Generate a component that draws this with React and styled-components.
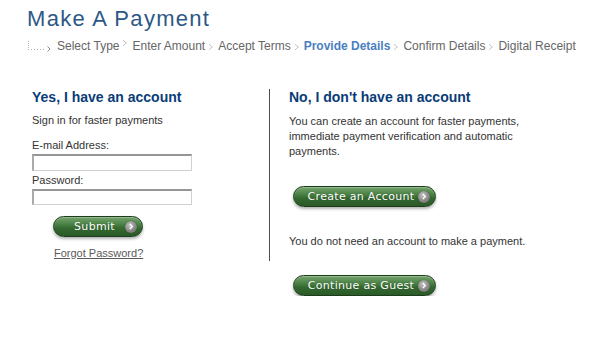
import React from "react"
import styled, { createGlobalStyle } from "styled-components"

const GlobalStyle = createGlobalStyle`
  html, body {
    margin: 0;
    padding: 0;
    background: #ffffff;
    font-family: "Liberation Sans", Arial, sans-serif;
    color: #333333;
  }
`

const Page = styled.div`
  padding-left: 27px;
  width: 588px;
`

const Title = styled.h1`
  margin: 6px 0 0;
  font-size: 22px;
  line-height: 26px;
  font-weight: normal;
  letter-spacing: 1.3px;
  color: #2d5886;
`

const Steps = styled.div`
  display: flex;
  align-items: center;
  margin-top: 6px;
  height: 16px;
  font-size: 12px;
  line-height: 16px;
  white-space: nowrap;
`

const Step = styled.span`
  color: ${p => (p.$active ? "#4a7fbf" : "#666666")};
  font-weight: ${p => (p.$active ? "bold" : "normal")};
`

const SepIcon = styled.svg`
  margin: 0 5px 0 4px;
  position: relative;
  top: ${p => (p.$raised ? "-3px" : "1px")};
`

const Sep = ({ raised }) => (
  <SepIcon $raised={raised} width="4" height="6" viewBox="0 0 4 6">
    <path d="M0.5 0.5 L3.2 3 L0.5 5.5" fill="none" stroke="#8a8a8a" strokeWidth="1" strokeDasharray="1 0.6" />
  </SepIcon>
)

const Lead = styled.svg`
  margin-right: 4px;
  position: relative;
  top: 1px;
`

const Columns = styled.div`
  display: flex;
  align-items: flex-start;
  margin-top: 35px;
`

const LeftCol = styled.div`
  width: 237px;
  padding: 0 0 0 5px;
  border-right: 1px solid #4d4d4d;
`

const RightCol = styled.div`
  padding-left: 19px;
`

const Heading = styled.h2`
  margin: 0;
  font-size: 14px;
  line-height: 16px;
  font-weight: bold;
  color: #0a3c78;
`

const Text = styled.p`
  margin: ${p => p.$mt || 0}px 0 0;
  font-size: 11px;
  line-height: ${p => p.$lh || 14}px;
  color: #333333;
  width: ${p => p.$w || "auto"};
`

const Label = styled.label`
  display: block;
  margin-top: ${p => p.$mt}px;
  font-size: 11px;
  line-height: 14px;
  color: #333333;
`

const Input = styled.input`
  display: block;
  box-sizing: border-box;
  margin-top: 2px;
  width: 160px;
  height: ${p => p.$h}px;
  padding: 0 2px;
  border-style: solid;
  border-width: 2px 1px 1px 2px;
  border-color: #969696 #d0d0d0 #d0d0d0 #aaaaaa;
  background: #ffffff;
  font-size: 11px;
  outline: none;
`

const Button = styled.button`
  display: flex;
  align-items: center;
  box-sizing: border-box;
  margin: ${p => p.$mt}px 0 0 ${p => p.$ml}px;
  width: ${p => p.$w}px;
  height: 21px;
  padding: 0 5px 0 10px;
  border: 1px solid #1c3d1a;
  border-radius: 11px;
  background: linear-gradient(to bottom, #76a36e 0%, #4e8548 35%, #33682f 60%, #2b5a28 100%);
  box-shadow: 0 2px 3px rgba(0, 0, 0, 0.3), inset 0 1px 0 rgba(255, 255, 255, 0.25);
  color: #ffffff;
  font-family: "DejaVu Sans", Verdana, sans-serif;
  font-size: 11px;
  letter-spacing: 0.3px;
  cursor: pointer;
`

const ButtonLabel = styled.span`
  flex: 1;
  text-align: center;
  text-shadow: 0 0 1px rgba(0, 0, 0, 0.3);
`

const ArrowDot = styled.span`
  display: flex;
  align-items: center;
  justify-content: center;
  width: 12px;
  height: 12px;
  border-radius: 50%;
  background: radial-gradient(circle at 40% 35%, #c4c4c4 0%, #8c8c8c 50%, #5e5e5e 100%);
  box-shadow: 0 0 1px rgba(0, 0, 0, 0.5);
`

const Arrow = () => (
  <ArrowDot>
    <svg width="6" height="7" viewBox="0 0 6 7">
      <path d="M1.8 1 L4.3 3.5 L1.8 6" fill="none" stroke="#ffffff" strokeWidth="1.4" />
    </svg>
  </ArrowDot>
)

const ForgotLink = styled.a`
  display: inline-block;
  margin: 9px 0 0 22px;
  font-size: 11px;
  line-height: 14px;
  color: #5a5a5a;
  text-decoration: underline;
`

const steps = ["Select Type", "Enter Amount", "Accept Terms", "Provide Details", "Confirm Details", "Digital Receipt"]

const App = () => (
  <>
    <GlobalStyle />
    <Page>
      <Title>Make A Payment</Title>
      <Steps>
        <Lead width="26" height="12" viewBox="0 0 26 12">
          <g fill="#b5b5b5">
            <rect x="1" y="0" width="1" height="1" />
            <rect x="1" y="2" width="1" height="1" />
            <rect x="1" y="4" width="1" height="1" />
            <rect x="1" y="6" width="1" height="1" />
            <rect x="1" y="8" width="1" height="1" />
            <rect x="4" y="8" width="1" height="1" />
            <rect x="7" y="8" width="1" height="1" />
            <rect x="10" y="8" width="1" height="1" />
            <rect x="13" y="8" width="1" height="1" />
            <rect x="16" y="8" width="1" height="1" />
          </g>
          <path d="M20.5 5.5 L23 8 L20.5 10.5" fill="none" stroke="#8a8a8a" strokeWidth="1" />
        </Lead>
        {steps.map((s, i) => (
          <React.Fragment key={s}>
            <Step $active={s === "Provide Details"}>{s}</Step>
            {i < steps.length - 1 && <Sep raised={i === 0} />}
          </React.Fragment>
        ))}
      </Steps>

      <Columns>
        <LeftCol>
          <Heading>Yes, I have an account</Heading>
          <Text $mt={8}>Sign in for faster payments</Text>
          <Label $mt={11}>E-mail Address:</Label>
          <Input type="text" $h={17} />
          <Label $mt={2}>Password:</Label>
          <Input type="password" $h={16} />
          <Button $mt={11} $ml={21} $w={90}>
            <ButtonLabel>Submit</ButtonLabel>
            <Arrow />
          </Button>
          <ForgotLink href="#">Forgot Password?</ForgotLink>
        </LeftCol>

        <RightCol>
          <Heading>No, I don't have an account</Heading>
          <Text $mt={9} $lh={15} $w="240px">
            You can create an account for faster payments, immediate payment verification and automatic payments.
          </Text>
          <Button $mt={27} $ml={4} $w={143}>
            <ButtonLabel>Create an Account</ButtonLabel>
            <Arrow />
          </Button>
          <Text $mt={27}>You do not need an account to make a payment.</Text>
          <Button $mt={27} $ml={4} $w={143}>
            <ButtonLabel>Continue as Guest</ButtonLabel>
            <Arrow />
          </Button>
        </RightCol>
      </Columns>
    </Page>
  </>
)

export default App
